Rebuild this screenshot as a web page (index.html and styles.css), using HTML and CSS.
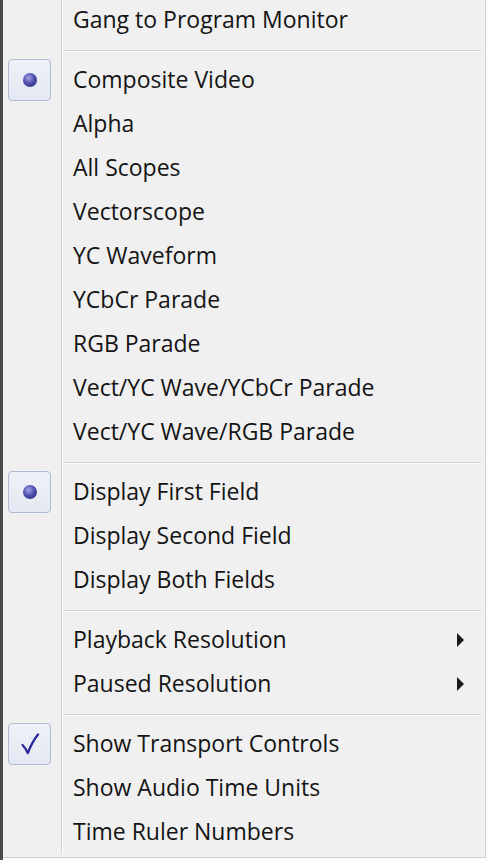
FILE: index.html
```html
<!DOCTYPE html>
<html>
<head>
<meta charset="utf-8">
<link rel="stylesheet" href="styles.css">
</head>
<body>
<div class="menu">
  <div class="gutter-line"></div>
  <div class="list">
    <div class="item first"><span class="icon"></span><span class="label">Gang to Program Monitor</span></div>
    <div class="sep"></div>
    <div class="item"><span class="icon box"><span class="dot"></span></span><span class="label">Composite Video</span></div>
    <div class="item"><span class="icon"></span><span class="label">Alpha</span></div>
    <div class="item"><span class="icon"></span><span class="label">All Scopes</span></div>
    <div class="item"><span class="icon"></span><span class="label">Vectorscope</span></div>
    <div class="item"><span class="icon"></span><span class="label">YC Waveform</span></div>
    <div class="item"><span class="icon"></span><span class="label">YCbCr Parade</span></div>
    <div class="item"><span class="icon"></span><span class="label">RGB Parade</span></div>
    <div class="item"><span class="icon"></span><span class="label">Vect/YC Wave/YCbCr Parade</span></div>
    <div class="item"><span class="icon"></span><span class="label">Vect/YC Wave/RGB Parade</span></div>
    <div class="sep"></div>
    <div class="item"><span class="icon box"><span class="dot"></span></span><span class="label">Display First Field</span></div>
    <div class="item"><span class="icon"></span><span class="label">Display Second Field</span></div>
    <div class="item"><span class="icon"></span><span class="label">Display Both Fields</span></div>
    <div class="sep"></div>
    <div class="item"><span class="icon"></span><span class="label">Playback Resolution</span><span class="arrow"></span></div>
    <div class="item"><span class="icon"></span><span class="label">Paused Resolution</span><span class="arrow"></span></div>
    <div class="sep"></div>
    <div class="item"><span class="icon box"><svg class="check" width="22" height="24" viewBox="0 0 22 24"><path d="M3.5 13 C5.5 15 7.5 18 8.8 21 C11.5 14 15 7.5 19 2.5" fill="none" stroke="#2a2a9c" stroke-width="2.3" stroke-linecap="round" stroke-linejoin="round"/></svg></span><span class="label">Show Transport Controls</span></div>
    <div class="item"><span class="icon"></span><span class="label">Show Audio Time Units</span></div>
    <div class="item"><span class="icon"></span><span class="label">Time Ruler Numbers</span></div>
  </div>
</div>
</body>
</html>
```
FILE: styles.css
```css
html, body {
  margin: 0;
  padding: 0;
  background: #f0f0f0;
}
.menu {
  position: relative;
  width: 488px;
  height: 860px;
  box-sizing: border-box;
  background: #f0f0f0;
  border-left: 3px solid #4a4a4a;
  overflow: hidden;
  font-family: "Open Sans", "Noto Sans", sans-serif;
  font-size: 23px;
  color: #141414;
}
.menu::after {
  content: "";
  position: absolute;
  left: 0; right: 0; top: 0; bottom: 0;
  border-right: 2px solid #fcfcfc;
  border-bottom: 2px solid #fcfcfc;
  box-shadow: inset -1px -1px 0 #d0d0d0;
  pointer-events: none;
}
.gutter-line {
  position: absolute;
  left: 58px;
  top: 0;
  bottom: 6px;
  width: 1px;
  background: #d2d2d2;
  box-shadow: 1px 0 0 #fdfdfd;
}
.list {
  margin-top: -2px;
  display: flex;
  flex-direction: column;
}
.item {
  height: 44px;
  display: flex;
  align-items: center;
}
.label {
  flex: 1;
  white-space: nowrap;
  position: relative;
  top: -1px;
}
.icon {
  width: 43px;
  height: 42px;
  margin-left: 5px;
  margin-right: 22px;
  box-sizing: border-box;
  display: flex;
  align-items: center;
  justify-content: center;
}
.icon.box {
  border: 1px solid #aebbd0;
  border-radius: 4px;
  background: linear-gradient(#eef1f8, #e4e8f2);
}
.dot {
  width: 14px;
  height: 14px;
  border-radius: 50%;
  background: radial-gradient(circle at 40% 35%, #a4a4e4 0%, #5050b0 45%, #24246c 100%);
}
.arrow {
  width: 0;
  height: 0;
  border-top: 7px solid transparent;
  border-bottom: 7px solid transparent;
  border-left: 7px solid #1a1a1a;
  margin-right: 24px;
}
.sep {
  height: 16px;
  box-sizing: border-box;
  padding-top: 8px;
  padding-left: 61px;
  padding-right: 7px;
}
.sep::before {
  content: "";
  display: block;
  height: 1px;
  background: #d3d3d3;
  box-shadow: 0 1px 0 #fdfdfd;
}
```
